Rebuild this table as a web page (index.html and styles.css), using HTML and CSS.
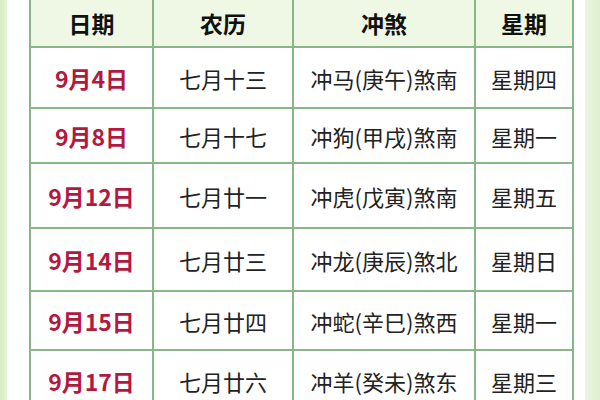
FILE: index.html
```html
<!DOCTYPE html>
<html lang="zh">
<head>
<meta charset="utf-8">
<link rel="stylesheet" href="styles.css">
</head>
<body>
<div class="page">
  <div class="strip-left"></div>
  <div class="table">
    <div class="cell head">日期</div>
    <div class="cell head">农历</div>
    <div class="cell head">冲煞</div>
    <div class="cell head">星期</div>

    <div class="cell date">9月4日</div>
    <div class="cell">七月十三</div>
    <div class="cell">冲马(庚午)煞南</div>
    <div class="cell">星期四</div>

    <div class="cell date">9月8日</div>
    <div class="cell">七月十七</div>
    <div class="cell">冲狗(甲戌)煞南</div>
    <div class="cell">星期一</div>

    <div class="cell date">9月12日</div>
    <div class="cell">七月廿一</div>
    <div class="cell">冲虎(戊寅)煞南</div>
    <div class="cell">星期五</div>

    <div class="cell date">9月14日</div>
    <div class="cell">七月廿三</div>
    <div class="cell">冲龙(庚辰)煞北</div>
    <div class="cell">星期日</div>

    <div class="cell date">9月15日</div>
    <div class="cell">七月廿四</div>
    <div class="cell">冲蛇(辛巳)煞西</div>
    <div class="cell">星期一</div>

    <div class="cell date">9月17日</div>
    <div class="cell">七月廿六</div>
    <div class="cell">冲羊(癸未)煞东</div>
    <div class="cell">星期三</div>
  </div>
  <div class="strip-right"></div>
</div>
</body>
</html>
```

FILE: styles.css
```css
html, body {
  margin: 0;
  padding: 0;
}
body {
  width: 600px;
  height: 400px;
  overflow: hidden;
  background: #ffffff;
  font-family: "Noto Sans CJK SC", "Noto Sans", sans-serif;
}
.page {
  display: flex;
  width: 600px;
  height: 400px;
  align-items: flex-start;
}
.strip-left {
  width: 7px;
  height: 400px;
  background: linear-gradient(to right, #d6ecc2, #e6f4da);
  margin-right: 22px;
  flex: none;
}
.table {
  flex: none;
  display: grid;
  grid-template-columns: 121px 138px 180px 96px;
  grid-template-rows: 46px 59px 53px 63px 61px 57px 60px;
  gap: 2px;
  padding: 0 2px;
  background: #8ab588;
}
.cell {
  background: #ffffff;
  display: flex;
  align-items: center;
  justify-content: center;
  font-size: 22px;
  color: #222222;
  white-space: nowrap;
  letter-spacing: 0;
}
.head {
  background: #eef8e5;
  color: #111111;
  font-weight: 700;
  font-size: 23px;
}
.date {
  color: #b3183f;
  font-weight: 700;
  font-size: 23px;
}
.strip-right {
  flex: none;
  width: 15px;
  height: 400px;
  margin-left: 11px;
  background: linear-gradient(to right, #eaf5df, #dfefcf);
}
```
